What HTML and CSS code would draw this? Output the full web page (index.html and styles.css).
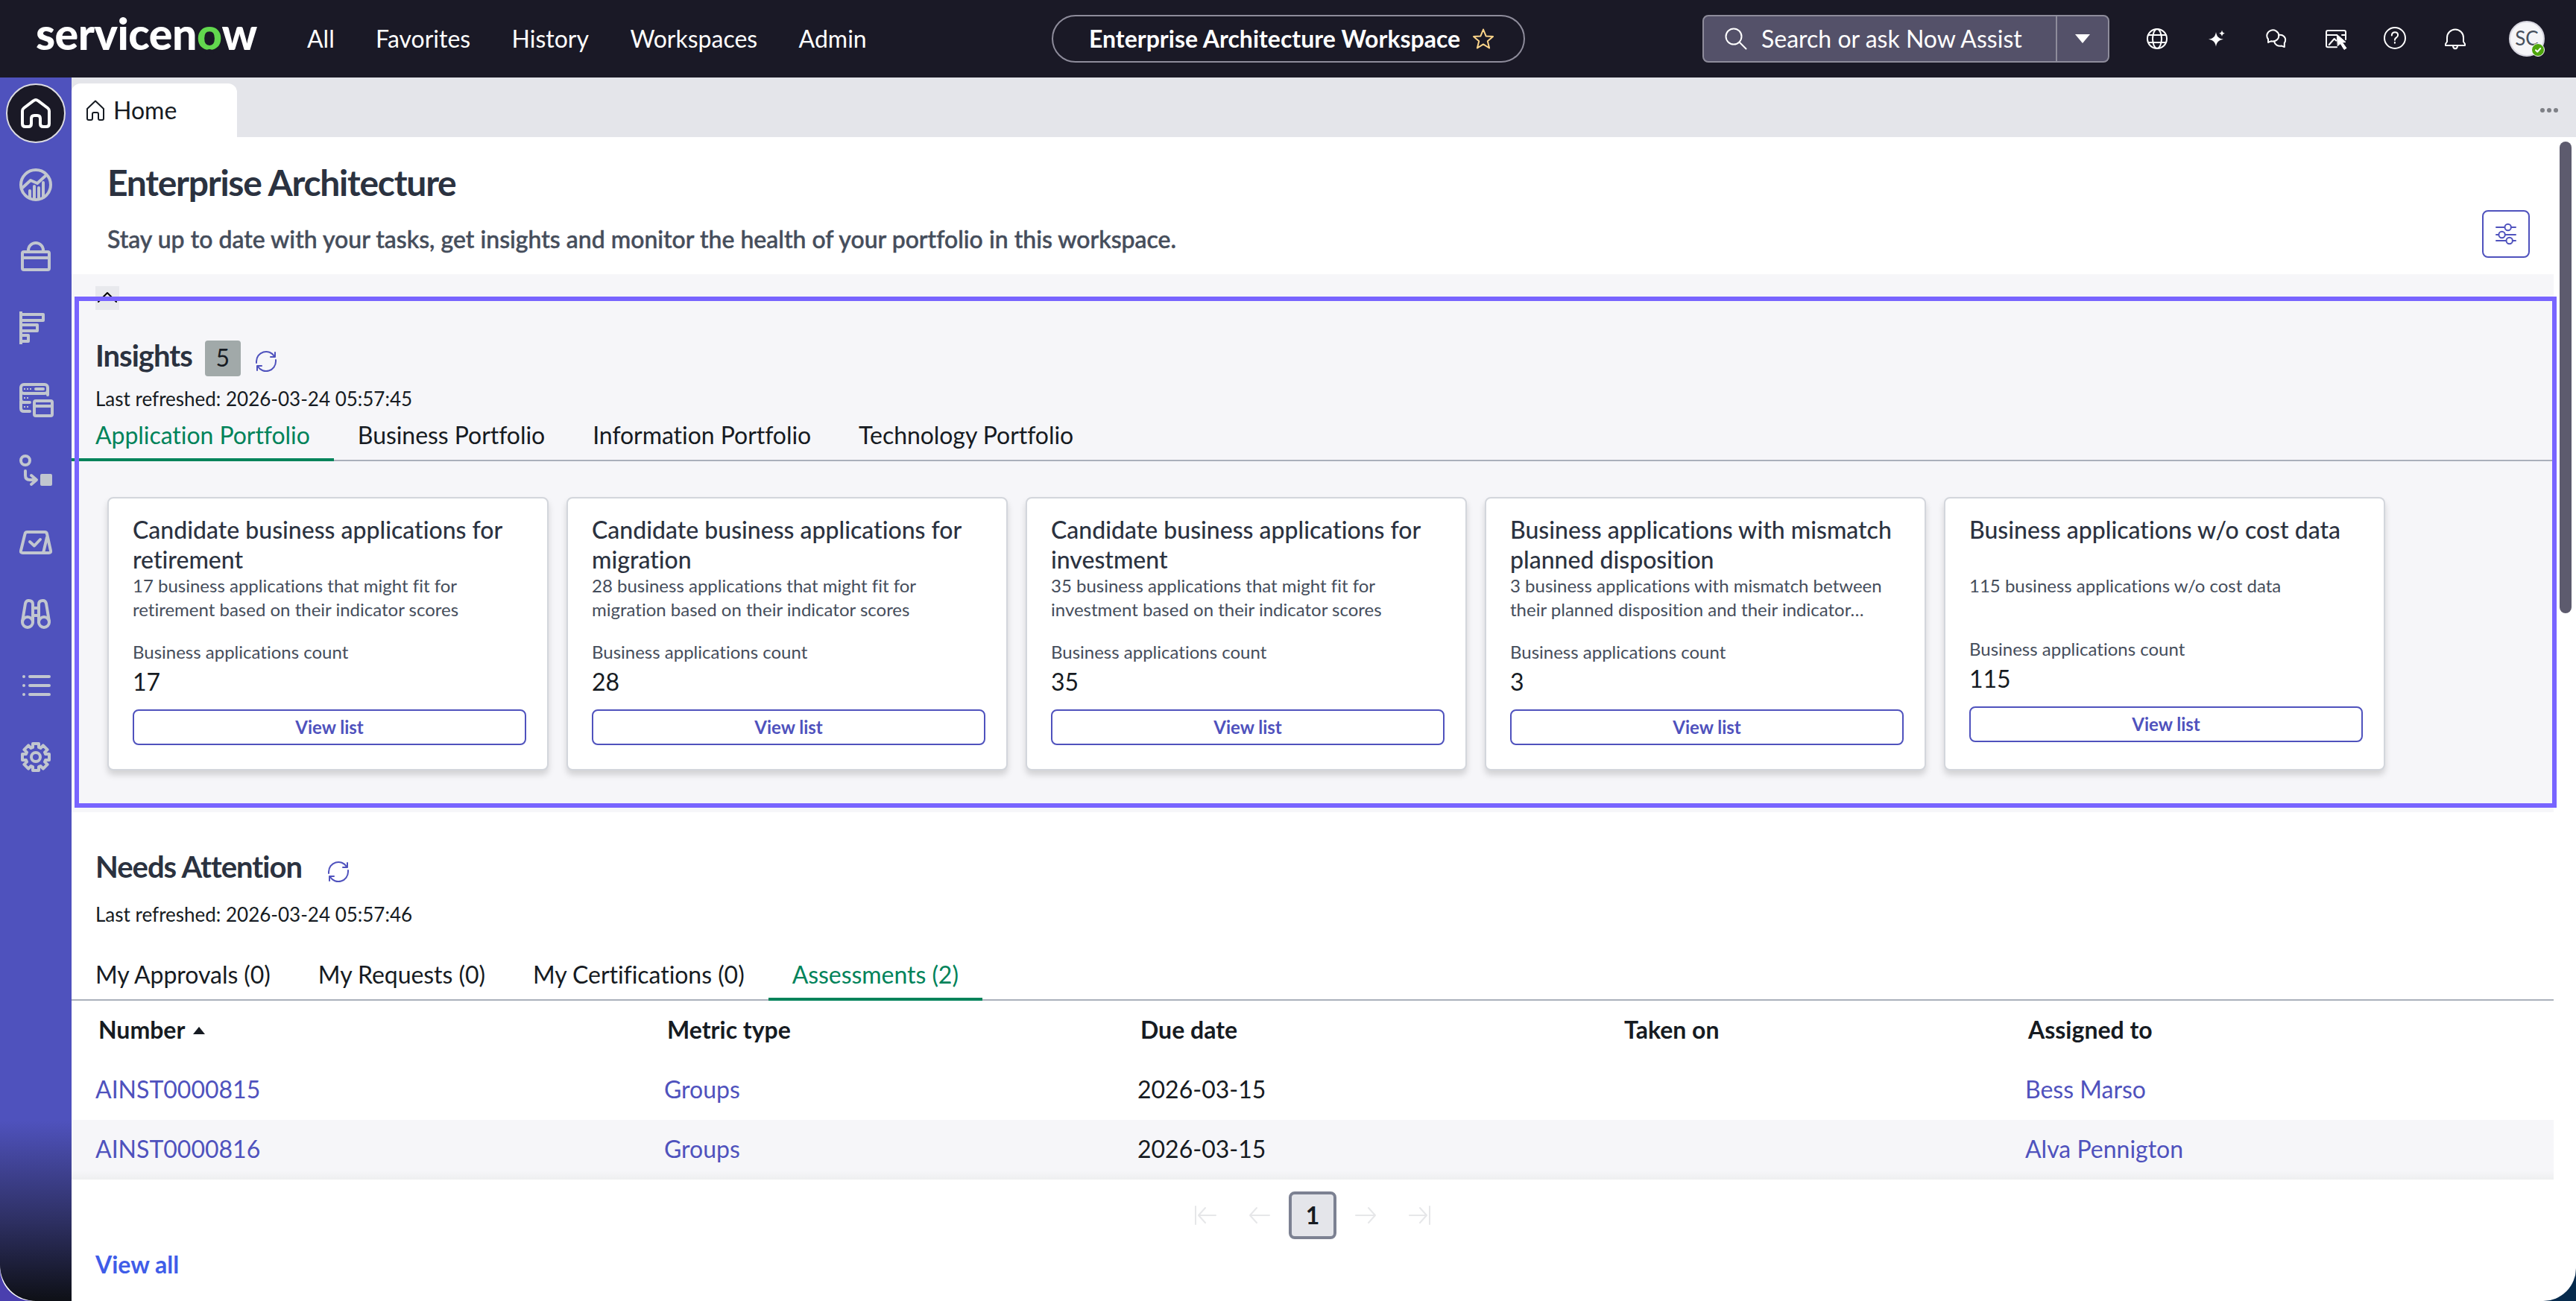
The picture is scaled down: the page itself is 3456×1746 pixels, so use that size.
FILE: index.html
```html
<!DOCTYPE html>
<html lang="en">
<head>
    <meta charset="UTF-8">
    <meta name="viewport" content="width=device-width, initial-scale=1.0">
    <title>Enterprise Architecture Workspace</title>
    <link rel="stylesheet" href="styles.css">
</head>
<body>
<div class="app">
    <header class="topbar">
        <div class="logo">servicen<span class="logo-o">o</span>w</div>
        <nav class="main-nav">
            <a>All</a>
            <a>Favorites</a>
            <a>History</a>
            <a>Workspaces</a>
            <a>Admin</a>
        </nav>
        <div class="context-pill">
            <span>Enterprise Architecture Workspace</span>
            <svg class="star" viewBox="0 0 32 32"><path d="M16 3.500l3.600 8.900 9.400.7-7.200 6.100 2.300 9.300-8.100-5.100-8.100 5.100 2.300-9.300L3 13.100l9.400-.7z"/></svg>
        </div>
        <div class="search">
            <div class="search-field">
                <svg class="icon" viewBox="0 0 32 32"><circle cx="13" cy="13" r="10.500"/><path d="M20.500 20.500l9 9"/></svg>
                <span>Search or ask Now Assist</span>
            </div>
            <div class="search-toggle"><i class="caret-down"></i></div>
        </div>
        <div class="tools">
            <svg class="icon" viewBox="0 0 32 32"><circle cx="16" cy="16" r="13"/><ellipse cx="16" cy="16" rx="6" ry="13"/><path d="M4 11h24M4 21h24"/></svg>
            <svg class="icon solid" viewBox="0 0 32 32"><path d="M15 7c1.200 6.500 3.500 8.600 10 9.700-6.500 1.200-8.800 3.300-10 9.800-1.200-6.500-3.500-8.600-10-9.800 6.500-1.100 8.800-3.200 10-9.700zM23 4.500c.6 2.700 1.500 3.600 4 4.200-2.500.6-3.400 1.500-4 4.200-.6-2.700-1.500-3.600-4-4.200 2.500-.6 3.400-1.500 4-4.200z"/></svg>
            <svg class="icon" viewBox="0 0 32 32"><path d="M5 21v-4.500A8 7.500 0 1 1 9.500 19.200Q7 19.500 5 21z"/><path d="M19 11c6-1 10 3 9 8-.2 1.200-.8 2-1.200 2.800V27q-2-.4-3.800-1.500c-5 1-9-1.500-10-6"/></svg>
            <svg class="icon" viewBox="0 0 32 32"><path d="M17 27.200H5q-2 0-2-2V7q0-2 2-2h22q2 0 2 2v10M3 11h14M24 11h5M6.700 24l7-8 2.500 2.500"/><path class="cursor" d="M17.500 10.500l11.500 10-4.500.5 5.500 7.500-3 2-5-8-3.500 3z"/></svg>
            <svg class="icon" viewBox="0 0 32 32"><circle cx="15" cy="15" r="14"/><path d="M10.800 11.500q.4-4.200 4.300-4.200 4 0 4 3.800 0 2.200-2.200 3.400-2 1-2 3.300M14.900 20.800v1"/></svg>
            <svg class="icon" viewBox="0 0 32 32"><path d="M5 20v-5.500a11 11 0 0 1 22 0V20l2 3v2H3v-2z"/><path d="M13 26q.5 3.300 3 3.300T19 26"/></svg>
        </div>
        <div class="avatar">SC
            <span class="presence"><svg viewBox="0 0 16 16"><path d="M5 8.200l2.200 2.300L11.200 6"/></svg></span>
        </div>
    </header>

    <div class="shell">
        <aside class="rail">
            <a class="rail-item active"><svg viewBox="0 0 48 48"><path d="M24 6q-1.500 0-3 1.200L8 17q-2 1.600-2 4v17q0 4 4 4h4q4 0 4-4v-7q0-4 4-4h4q4 0 4 4v7q0 4 4 4h4q4 0 4-4V21q0-2.400-2-4L27 7.200Q25.500 6 24 6z"/></svg></a>
            <a class="rail-item"><svg viewBox="0 0 48 48"><circle cx="24" cy="24" r="20"/><path d="M5 29l12-11 9 4 11-10M16 32v9M22 26v17M28 28v15M34 21v20"/></svg></a>
            <a class="rail-item"><svg viewBox="0 0 48 48"><rect x="6" y="18" width="36" height="24" rx="2"/><path d="M6 26h36M14 18v-2a10 10 0 0 1 20 0v2"/></svg></a>
            <a class="rail-item"><svg viewBox="0 0 48 48"><path d="M4 2v44" stroke-linecap="butt"/><rect x="4" y="6" width="30" height="8"/><rect x="4" y="20" width="22" height="8"/><rect x="4" y="34" width="10" height="8"/></svg></a>
            <a class="rail-item"><svg viewBox="0 0 48 48"><rect x="4" y="4" width="36" height="12" rx="4"/><path d="M40 12v6M4 12v12q0 4 4 4h8M4 26v10q0 4 4 4h8M24 10h10"/><path class="thin" d="M8 10h2M12 10h2M16 10h2M8 22h2M12 22h2M8 34h2M12 34h2"/><rect x="22" y="26" width="24" height="20" rx="2"/><path d="M22 33h24"/></svg></a>
            <a class="rail-item"><svg viewBox="0 0 48 48"><circle cx="10" cy="10" r="6"/><path d="M10 24v6q0 6 6 6h8M18 30l7 6-7 6"/><rect class="fill" x="32" y="30" width="12" height="12"/></svg></a>
            <a class="rail-item"><svg viewBox="0 0 48 48"><path d="M12.500 10H36q2.500 0 3 2.500L44 35q.7 3-2.500 3h-35q-3.200 0-2.500-3L9.500 12.500Q10 10 12.500 10zM32 38q2.500 0 3-4l4-17M16 23l6 5.500 8-8.500"/></svg></a>
            <a class="rail-item"><svg viewBox="0 0 48 48"><circle cx="13" cy="35" r="7"/><circle cx="35" cy="35" r="7"/><path d="M6 34l4-24q.8-4 4.500-4Q20 6 20 11v24M42 34l-4-24q-.8-4-4.500-4Q28 6 28 11v24M20 16h8M20 26h8"/></svg></a>
            <a class="rail-item"><svg viewBox="0 0 48 48"><path d="M8 12h.01M16 12h26M8 24h.01M16 24h26M8 36h.01M16 36h26"/></svg></a>
            <a class="rail-item"><svg viewBox="0 0 48 48"><circle cx="24" cy="24" r="6"/><path d="M20 11V6h8v5l2.400 1 3.500-3.600 5.700 5.700L36 17.600l1 2.400h5v8h-5l-1 2.400 3.600 3.500-5.700 5.700-3.500-3.600-2.400 1v5h-8v-5l-2.400-1-3.500 3.600-5.700-5.700 3.600-3.500-1-2.400H6v-8h5l1-2.400-3.600-3.500 5.700-5.700 3.500 3.600z"/></svg></a>
        </aside>

        <main class="content">
            <div class="tabstrip">
                <div class="page-tab">
                    <svg class="icon" viewBox="0 0 32 32"><path d="M16 3.500L5 14v13q0 2 2 2h3q2 0 2-2v-6q0-2 2-2h4q2 0 2 2v6q0 2 2 2h3q2 0 2-2V14z"/></svg>
                    <span>Home</span>
                </div>
                <div class="more"><i></i><i></i><i></i></div>
            </div>

            <section class="hero">
                <div>
                    <h1>Enterprise Architecture</h1>
                    <p>Stay up to date with your tasks, get insights and monitor the health of your portfolio in this workspace.</p>
                </div>
                <button class="settings"><svg viewBox="0 0 32 32"><path d="M3 7h11M23 7h6M3 17h3M15 17h14M3 25h13M25 25h4"/><circle cx="18.700" cy="7" r="4.200"/><circle cx="10.600" cy="17" r="4.200"/><circle cx="20.700" cy="25" r="4.200"/></svg></button>
            </section>

            <section class="insights">
                <div class="highlight"></div>
                <button class="collapse"><svg viewBox="0 0 32 32"><path d="M4 21L16 9l12 12"/></svg></button>
                <div class="section-head">
                    <h2>Insights</h2>
                    <span class="badge">5</span>
                    <svg class="refresh" viewBox="0 0 32 32"><path d="M3 18V16A13 13 0 0 1 27 9M28 4v6h-6M29 14v2A13 13 0 0 1 5 23M4 28v-6h6"/></svg>
                </div>
                <p class="refreshed">Last refreshed: 2026-03-24 05:57:45</p>
                <div class="tabs">
                    <a class="tab selected">Application Portfolio</a>
                    <a class="tab">Business Portfolio</a>
                    <a class="tab">Information Portfolio</a>
                    <a class="tab">Technology Portfolio</a>
                </div>
                <div class="cards">
                    <article class="card">
                        <h3>Candidate business applications for retirement</h3>
                        <p class="desc">17 business applications that might fit for retirement based on their indicator scores</p>
                        <p class="label">Business applications count</p>
                        <p class="count">17</p>
                        <button>View list</button>
                    </article>
                    <article class="card">
                        <h3>Candidate business applications for migration</h3>
                        <p class="desc">28 business applications that might fit for migration based on their indicator scores</p>
                        <p class="label">Business applications count</p>
                        <p class="count">28</p>
                        <button>View list</button>
                    </article>
                    <article class="card">
                        <h3>Candidate business applications for investment</h3>
                        <p class="desc">35 business applications that might fit for investment based on their indicator scores</p>
                        <p class="label">Business applications count</p>
                        <p class="count">35</p>
                        <button>View list</button>
                    </article>
                    <article class="card">
                        <h3>Business applications with mismatch planned disposition</h3>
                        <p class="desc">3 business applications with mismatch between their planned disposition and their indicator…</p>
                        <p class="label">Business applications count</p>
                        <p class="count">3</p>
                        <button>View list</button>
                    </article>
                    <article class="card short">
                        <h3>Business applications w/o cost data</h3>
                        <p class="desc">115 business applications w/o cost data</p>
                        <p class="label">Business applications count</p>
                        <p class="count">115</p>
                        <button>View list</button>
                    </article>
                </div>
            </section>

            <section class="attention">
                <div class="section-head">
                    <h2>Needs Attention</h2>
                    <svg class="refresh" viewBox="0 0 32 32"><path d="M3 18V16A13 13 0 0 1 27 9M28 4v6h-6M29 14v2A13 13 0 0 1 5 23M4 28v-6h6"/></svg>
                </div>
                <p class="refreshed">Last refreshed: 2026-03-24 05:57:46</p>
                <div class="tabs">
                    <a class="tab">My Approvals (0)</a>
                    <a class="tab">My Requests (0)</a>
                    <a class="tab">My Certifications (0)</a>
                    <a class="tab selected">Assessments (2)</a>
                </div>
                <div class="table">
                    <div class="row head">
                        <span>Number <i class="caret-up"></i></span>
                        <span>Metric type</span>
                        <span>Due date</span>
                        <span>Taken on</span>
                        <span>Assigned to</span>
                    </div>
                    <div class="row">
                        <a>AINST0000815</a>
                        <a>Groups</a>
                        <span>2026-03-15</span>
                        <span></span>
                        <a>Bess Marso</a>
                    </div>
                    <div class="row alt">
                        <a>AINST0000816</a>
                        <a>Groups</a>
                        <span>2026-03-15</span>
                        <span></span>
                        <a>Alva Pennigton</a>
                    </div>
                </div>
                <div class="pager">
                    <svg viewBox="0 0 32 32"><path d="M3 4v24M30 16H7M16 6L7 16l9 10"/></svg>
                    <svg viewBox="0 0 32 32"><path d="M30 16H4M13 6L4 16l9 10"/></svg>
                    <span class="page">1</span>
                    <svg viewBox="0 0 32 32"><path d="M2 16h26M19 6l9 10-9 10"/></svg>
                    <svg viewBox="0 0 32 32"><path d="M29 4v24M2 16h23M16 6l9 10-9 10"/></svg>
                </div>
                <a class="view-all">View all</a>
            </section>
            <div class="scroll-thumb"></div>
        </main>
    </div>
</div>
</body>
</html>
```
FILE: styles.css
```css
* {margin: 0; padding: 0; box-sizing: border-box;}
body {
height: 1746px;
overflow: hidden;
font: 32px/40px Lato, "Liberation Sans", sans-serif;
font-variant-ligatures: none;
color: #161b22;
background: linear-gradient(90deg, #4a3fae 50%, #062a4c 50%);
}
button {font-family: inherit; font-variant-ligatures: none; background: none;}
svg {fill: none; stroke: currentColor; stroke-width: 2; stroke-linejoin: round; stroke-linecap: round; flex: none; display: block;}
svg .fill {fill: currentColor;}
.icon {width: 32px; height: 32px;}
.icon.solid {fill: currentColor; stroke: none;}
.icon .cursor {fill: currentColor; stroke-width: 1;}
.app {
display: flex;
flex-direction: column;
height: 1746px;
background: white;
border-radius: 0 0 44px 44px;
overflow: hidden;
}

/* top bar */
.topbar {
display: flex;
align-items: center;
flex: none;
height: 104px;
padding: 0 42px 0 48px;
background: #1a1926;
color: white;
}
.logo {
width: 364px;
font-size: 59px;
line-height: 60px;
font-weight: 900;
letter-spacing: -0.5px;
padding-bottom: 14px;
}
.logo-o {position: relative; color: #62d84e;}
/* notch under the green ring */
.logo-o::after {
content: "";
position: absolute;
left: 11px;
bottom: 8px;
width: 12px;
height: 6px;
border-radius: 6px 6px 0 0;
background: #1a1926;
}
.main-nav {display: flex; gap: 55.4px; width: 999px; line-height: 38px;}
.context-pill {
display: flex;
align-items: center;
justify-content: space-between;
width: 635px;
height: 64px;
padding: 0 38px 0 48px;
border: 2px solid #8e8c9b;
border-radius: 32px;
font-weight: bold;
}
.star {width: 32px; height: 32px; color: #fdd58a;}
.search {
display: flex;
width: 546px;
height: 64px;
margin-left: 238px;
background: #545169;
border: 2px solid #8e8c9b;
border-radius: 8px;
}
.search-field {display: flex; align-items: center; gap: 18px; width: 474px; padding-left: 27px; border-right: 2px solid #8e8c9b;}
.search-toggle {display: flex; align-items: center; justify-content: center; flex: 1;}
.caret-down {border: 10px solid transparent; border-top: 12px solid white; border-bottom: 0;}
.tools {display: flex; gap: 48px; margin-left: 48px;}
.avatar {
position: relative;
width: 48px;
height: 48px;
margin-left: auto;
border: 2px solid #d5d4de;
border-radius: 50%;
background: #f5f5f8;
color: #46505c;
font-size: 26px;
line-height: 43px;
text-align: center;
}
.presence {position: absolute; right: -2px; bottom: -2px; width: 18px; height: 18px; border: 1px solid white; border-radius: 50%; background: #4ea60c; color: white;}
.presence svg {width: 16px; height: 16px;}

/* left rail */
.shell {display: flex; flex: 1;}
.rail {
display: flex;
flex-direction: column;
align-items: center;
gap: 16px;
width: 96px;
padding-top: 8px;
background: linear-gradient(#4f52bd 1400px, #2f3166 1530px, #0e1016 1642px);
border-radius: 0 0 0 48px;
color: #c1c6cf;
}
.rail-item {display: flex; align-items: center; justify-content: center; width: 80px; height: 80px;}
.rail-item svg {width: 48px; height: 48px; stroke-width: 4;}
.rail-item .thin {stroke-width: 2; stroke-linecap: butt;}
.rail-item.active {background: #1a1926; border: 2px solid #dcdce2; border-radius: 50%; color: white;}

.content {position: relative; flex: 1;}
.tabstrip {display: flex; align-items: flex-end; justify-content: space-between; height: 80px; padding-right: 24px; background: #e4e5ea;}
.page-tab {display: flex; align-items: center; gap: 8px; width: 222px; height: 72px; padding-left: 16px; background: white; border-radius: 12px 12px 0 0;}
.more {display: flex; gap: 3px; height: 72px; align-items: center;}
.more i {width: 6px; height: 6px; border-radius: 50%; background: #7e8086;}
.hero {display: flex; justify-content: space-between; height: 184px; padding: 0 62px 0 48px;}
.hero h1 {margin-top: 31px; font-size: 48px; line-height: 60px; letter-spacing: -1.25px; color: #2b3240;}
.hero p {margin-top: 26px; font-weight: 500; -webkit-text-stroke: 0.5px #454d5b; color: #454d5b;}
.settings {width: 64px; height: 64px; margin-top: 98px; padding: 14px; border: 2px solid #4f52bd; border-radius: 8px; color: #4f52bd;}
.settings svg {width: 32px; height: 32px;}

/* insights */
.insights {position: relative; width: 3330px; height: 722px; padding-top: 16px; background: #f6f6f9;}
.highlight {position: absolute; left: 4px; top: 30px; width: 3330px; height: 686px; border: 6px solid #7864ff;}
.collapse {display: block; width: 32px; height: 32px; margin-left: 32px; border: 0; background: #e8e9ed;}
.section-head {display: flex; align-items: flex-start; padding-left: 32px; height: 48px;}
.section-head h2 {font-size: 40px; line-height: 40px; letter-spacing: -1px; color: #2b3240;}
.insights .section-head {margin-top: 41px;}
.badge {width: 48px; height: 48px; margin-left: 17px; border-radius: 4px; background: #a1a9a9; line-height: 46px; text-align: center;}
.refresh {width: 32px; height: 32px; margin: 12px 0 0 18px; color: #4f52bd;}
.refreshed {margin-top: 14px; padding-left: 32px; font-size: 26px; line-height: 32px;}
.tabs {display: flex; width: 3330px; height: 68px; border-bottom: 2px solid #aab0bb;}
.tab {height: 68px; padding: 13px 32px 0; letter-spacing: -0.05px; white-space: nowrap;}
.tab.selected {color: #00835a; border-bottom: 4px solid #00835a;}
.cards {display: flex; gap: 24px; margin: 48px 0 0 48px;}
.card {
width: 592px;
height: 367px;
padding: 22px 30px 0 32px;
background: white;
border: 2px solid #d3d6dc;
border-radius: 8px;
box-shadow: 0 6px 8px rgba(0, 0, 0, 0.15);
}
.card h3 {height: 79px; font-size: 32px; font-weight: 500; color: #2b3240;}
.desc, .label {font-size: 24px; line-height: 32px; color: #454d5b;}
.desc {height: 64px;}
.label {margin-top: 25px;}
.short .label {margin-top: 21px;}
.count {margin-top: 4px;}
.card button {display: block; width: 528px; height: 48px; margin-top: 17px; padding-bottom: 2px; border: 2px solid #4f52bd; border-radius: 8px; color: #4f52bd; font-size: 24px; font-weight: bold;}

/* needs attention */
.attention {width: 3330px; padding-top: 53px;}
.attention .refresh {margin: 11px 0 0 33px;}
.attention .refreshed {margin-top: 20px;}
.attention .tabs {margin-top: 32px;}
.row {display: grid; grid-template-columns: 763px 635px 649px 542px 741px; height: 80px; line-height: 78px;}
.row > * {padding-left: 32px;}
.row a {color: #4f52bd;}
.row.head {font-weight: bold;}
.row.head > * {padding-left: 36px;}
.row.alt {background: linear-gradient(#f6f6f9 85%, #eeeff0);}
.caret-up {display: inline-block; margin: 0 0 6px 3px; border: 8px solid transparent; border-bottom: 10px solid #161b22; border-top: 0;}
.pager {display: flex; align-items: center; justify-content: center; gap: 40px; height: 64px; margin-top: 16px; color: #e6e7e9;}
.pager svg {width: 32px; height: 32px;}
.page {width: 64px; height: 64px; margin: 0 -16px; border: 4px solid #7c8192; border-radius: 8px; background: #e4e5ea; color: #161b22; font-weight: bold; line-height: 56px; text-align: center;}
.view-all {display: block; margin: 14px 0 0 32px; color: #3f5de8; font-weight: bold;}
.scroll-thumb {position: absolute; left: 3338px; top: 86px; width: 16px; height: 633px; border-radius: 8px; background: #5d5b6e;}
```
